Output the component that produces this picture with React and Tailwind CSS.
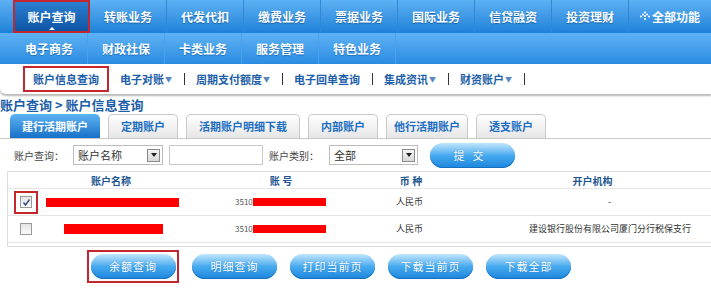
const topMenu = ['账户查询', '转账业务', '代发代扣', '缴费业务', '票据业务', '国际业务', '信贷融资', '投资理财'];
const secondMenu = ['电子商务', '财政社保', '卡类业务', '服务管理', '特色业务'];
const subMenu = [
  { label: '电子对账', arrow: true },
  { label: '周期支付额度', arrow: true },
  { label: '电子回单查询' },
  { label: '集成资讯', arrow: true },
  { label: '财资账户', arrow: true },
];
const tabs = [
  { label: '建行活期账户', w: 'w-[90px]' },
  { label: '定期账户', w: 'w-[70px]' },
  { label: '活期账户明细下载', w: 'w-[114px]' },
  { label: '内部账户', w: 'w-[70px]' },
  { label: '他行活期账户', w: 'w-[82px]' },
  { label: '透支账户', w: 'w-[70px]' },
];
const actions = ['余额查询', '明细查询', '打印当前页', '下载当前页', '下载全部'];

const font = { fontFamily: '"Noto Sans CJK SC", "Noto Sans", sans-serif' };

const Pill = ({ children, className = '' }) => (
  <div
    className={`flex h-[25px] w-[85px] items-center justify-center rounded-full bg-gradient-to-b from-[#bfe6fc] via-[#45aaee] to-[#1b86dd] text-[11px] tracking-[1px] text-white shadow-[inset_0_-1px_0_#1570c0] [text-shadow:0_0_1px_#2a7fc8] ${className}`}
  >
    {children}
  </div>
);

const Checkbox = ({ checked }) => (
  <div className="flex h-[12px] w-[12px] items-center justify-center border border-[#9a9a9a] bg-gradient-to-b from-[#e4e4e4] to-[#fafafa]">
    {checked && (
      <svg width="9" height="9" viewBox="0 0 9 9">
        <path d="M1.5 4.5 L3.5 7 L7.5 1.5" fill="none" stroke="#3a4a7a" strokeWidth="1.4" />
      </svg>
    )}
  </div>
);

const SelectBox = ({ value, w }) => (
  <div className={`flex h-[20px] ${w} items-center justify-between border border-[#bdbdbd] bg-white pl-[4px] pr-[2px] text-[11px] text-[#333]`}>
    <span>{value}</span>
    <div className="flex h-[13px] w-[13px] items-center justify-center border border-[#8a8a8a] bg-gradient-to-b from-[#f4f4f4] to-[#d8d8d8]">
      <svg width="6" height="4" viewBox="0 0 6 4">
        <path d="M0 0 H6 L3 4 Z" fill="#222" />
      </svg>
    </div>
  </div>
);

const Row = ({ children }) => (
  <div className="grid h-[27px] grid-cols-[206px_134px_126px_1fr] items-center border-b border-[#e6e6e6] text-[9px] text-[#333]">
    {children}
  </div>
);

export default function App() {
  return (
    <div className="h-[288px] w-[711px] overflow-hidden bg-white" style={font}>
      {/* Main menu */}
      <div className="flex h-[33px] bg-gradient-to-b from-[#5cb1f3] to-[#1c81d9]">
        <div className="w-[13px]" />
        {topMenu.map((m, i) => (
          <div
            key={m}
            className={
              i === 0
                ? 'relative flex w-[77px] items-center justify-center border-2 border-[#c4262e] bg-gradient-to-b from-[#2b7fd0] to-[#0f55a6] text-[12px] font-bold text-white'
                : 'flex w-[77px] items-center justify-center border-r border-[#2c8ad9] text-[12px] font-bold text-white [text-shadow:0_1px_1px_#1360a8]'
            }
          >
            {m}
            {i === 0 && (
              <span className="absolute bottom-[1px] left-1/2 h-0 w-0 -translate-x-1/2 border-x-[3px] border-b-[3px] border-x-transparent border-b-white" />
            )}
          </div>
        ))}
        <div className="flex flex-1 items-center justify-center gap-[2px] text-[12px] font-bold text-white">
          <svg width="10" height="11" viewBox="0 0 10 11">
            <g fill="#fff">
              <circle cx="5" cy="1.5" r="1" />
              <circle cx="3" cy="3.5" r="1" />
              <circle cx="7" cy="3.5" r="1" />
              <circle cx="1" cy="5.5" r="1" />
              <circle cx="9" cy="5.5" r="1" />
              <circle cx="5" cy="5" r="1" />
              <circle cx="5" cy="8" r="1" />
            </g>
          </svg>
          全部功能
        </div>
      </div>

      {/* Second menu */}
      <div className="flex h-[31px] bg-gradient-to-b from-[#5db2f4] to-[#2a8ce2]">
        <div className="w-[11px]" />
        {secondMenu.map((m) => (
          <div
            key={m}
            className="flex w-[77px] items-center justify-center border-r border-[#4aa2ea] text-[12px] font-bold text-white [text-shadow:0_1px_1px_#1a6fc0]"
          >
            {m}
          </div>
        ))}
      </div>

      {/* Sub menu */}
      <div className="flex h-[30px] items-center rounded-bl-[6px] pl-[23px] text-[11px] font-bold text-[#1c5ea8] shadow-[0_2px_2px_#b8b8b8]">
        <div className="flex h-[26px] w-[86px] items-center justify-center border-2 border-[#c4262e]">
          账户信息查询
        </div>
        {subMenu.map((s) => (
          <div key={s.label} className="flex items-center">
            <span className="ml-[11px] mr-[12px] flex items-center">
              {s.label}
              {s.arrow && <span className="ml-[1px] text-[7px] text-[#5a86c0]">▼</span>}
            </span>
            <div className="h-[12px] w-[1px] bg-[#333]" />
          </div>
        ))}
      </div>

      {/* Breadcrumb */}
      <div className="mt-[3px] h-[16px] whitespace-pre text-[13px] font-bold leading-[16px] text-[#1c5ea8]">
        账户查询 &gt; 账户信息查询
      </div>

      {/* Tabs */}
      <div className="mt-[2px] flex h-[24px] items-end gap-[8px] border-b border-[#c8c8c8] pl-[10px] text-[11px] font-bold">
        {tabs.map((t, i) => (
          <div
            key={t.label}
            className={
              i === 0
                ? `flex h-[24px] ${t.w} items-center justify-center rounded-t-[5px] bg-gradient-to-b from-[#5cb4f2] to-[#1570c8] text-white`
                : `flex h-[24px] ${t.w} items-center justify-center rounded-t-[5px] border border-b-0 border-[#c9c9c9] bg-gradient-to-b from-[#ffffff] to-[#e6e6e6] text-[#1c6ec2]`
            }
          >
            {t.label}
          </div>
        ))}
      </div>

      {/* Query form */}
      <div className="flex h-[32px] items-center whitespace-nowrap text-[10px] text-[#444]">
        <span className="ml-[14px] w-[59px]">账户查询：</span>
        <SelectBox value="账户名称" w="w-[90px]" />
        <div className="ml-[6px] h-[20px] w-[94px] border border-[#c8c8c8] bg-white" />
        <span className="ml-[6px] w-[60px]">账户类别：</span>
        <SelectBox value="全部" w="w-[89px]" />
        <Pill className="ml-[12px] h-[22px] tracking-[8px]">提交</Pill>
      </div>

      {/* Table */}
      <div className="ml-[7px] border border-r-0 border-[#dcdcdc] pb-[3px]">
        <div className="grid h-[17px] grid-cols-[206px_134px_126px_1fr] items-center border-b border-[#e6e6e6] text-[10px] font-bold text-[#1c5590]">
          <span className="text-center">账户名称</span>
          <span className="text-center">账 号</span>
          <span className="text-center">币 种</span>
          <span className="text-center">开户机构</span>
        </div>
        <Row>
          <div className="flex items-center">
            <div className="ml-[6px] flex h-[23px] w-[24px] items-center justify-center border-2 border-[#c4262e]">
              <Checkbox checked />
            </div>
            <div className="ml-[8px] h-[9px] w-[133px] bg-[#f00]" />
          </div>
          <div className="flex items-center pl-[21px] text-[8px] text-[#555]">
            3510<div className="h-[8px] w-[73px] bg-[#f00]" />
          </div>
          <span className="pl-[48px]">人民币</span>
          <span className="pl-[134px]">-</span>
        </Row>
        <Row>
          <div className="flex items-center">
            <div className="ml-[12px]">
              <Checkbox />
            </div>
            <div className="ml-[32px] h-[10px] w-[99px] bg-[#f00]" />
          </div>
          <div className="flex items-center pl-[21px] text-[8px] text-[#555]">
            3510<div className="h-[8px] w-[73px] bg-[#f00]" />
          </div>
          <span className="pl-[48px]">人民币</span>
          <span className="pl-[55px]">建设银行股份有限公司厦门分行税保支行</span>
        </Row>
      </div>

      {/* Actions */}
      <div className="mt-[3px] flex items-center gap-[13px] pl-[87px]">
        <div className="flex h-[33px] w-[92px] items-center justify-center border-2 border-[#c4262e]">
          <Pill>{actions[0]}</Pill>
        </div>
        {actions.slice(1).map((a) => (
          <Pill key={a}>{a}</Pill>
        ))}
      </div>
    </div>
  );
}
